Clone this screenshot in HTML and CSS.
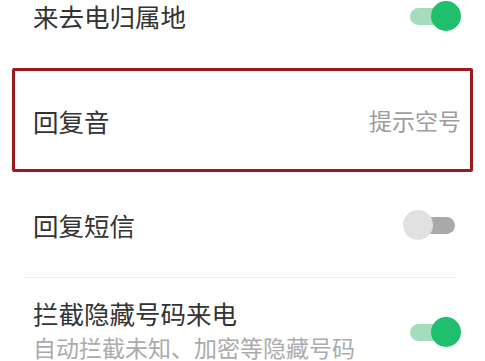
FILE: index.html
```html
<!DOCTYPE html>
<html lang="zh-CN">
<head>
    <meta charset="UTF-8">
    <meta name="viewport" content="width=device-width, initial-scale=1.0">
    <title>通话设置</title>
    <link rel="stylesheet" href="styles.css">
</head>
<body>
    <div class="list">
        <div class="row">
            <span class="title">来去电归属地</span>
            <span class="switch on"></span>
        </div>
        <div class="row selected">
            <span class="title">回复音</span>
            <span class="value">提示空号</span>
        </div>
        <div class="row">
            <span class="title">回复短信</span>
            <span class="switch"></span>
        </div>
        <div class="divider"></div>
        <div class="row tall">
            <div class="text">
                <span class="title">拦截隐藏号码来电</span>
                <span class="summary">自动拦截未知、加密等隐藏号码</span>
            </div>
            <span class="switch on"></span>
        </div>
    </div>
</body>
</html>
```

FILE: styles.css
```css
body {
    margin: 0;
    background: #fff;
    font-family: "Noto Sans CJK SC", "Noto Sans", sans-serif;
    overflow: hidden;
}

.list {
    margin-top: -37px;
}

.row {
    display: flex;
    align-items: center;
    justify-content: space-between;
    height: 99px;
    margin: 0 12px;
    padding: 0 9px 0 18px;
    border: 3px solid transparent;
}

.row.selected {
    border-color: #9a1a1e;
    border-radius: 2px;
    height: 98px;
}

.row.tall {
    align-items: flex-start;
    padding-top: 14px;
    height: auto;
}

.title {
    font-size: 25.5px;
    color: #333;
    line-height: 35px;
}

.value {
    font-size: 23px;
    color: #9c9c9c;
}

.text {
    display: flex;
    flex-direction: column;
}

.summary {
    font-size: 23px;
    color: #ababab;
    line-height: 34px;
}

.divider {
    height: 1px;
    background: #ececec;
    margin: 0 28px 0 25px;
}

.switch {
    position: relative;
    width: 58px;
    height: 30px;
    flex-shrink: 0;
}

.row.tall .switch {
    margin-top: 22px;
}

.switch::before {
    content: "";
    position: absolute;
    left: 7px;
    right: 6px;
    top: 7px;
    height: 17px;
    border-radius: 9px;
    background: #a9a9a9;
}

.switch::after {
    content: "";
    position: absolute;
    left: 0;
    top: 0;
    width: 30px;
    height: 30px;
    border-radius: 50%;
    background: #e1e1e1;
}

.switch.on::before {
    background: #a6dcbe;
}

.switch.on::after {
    left: auto;
    right: 0;
    background: #1fbf6d;
}
```
